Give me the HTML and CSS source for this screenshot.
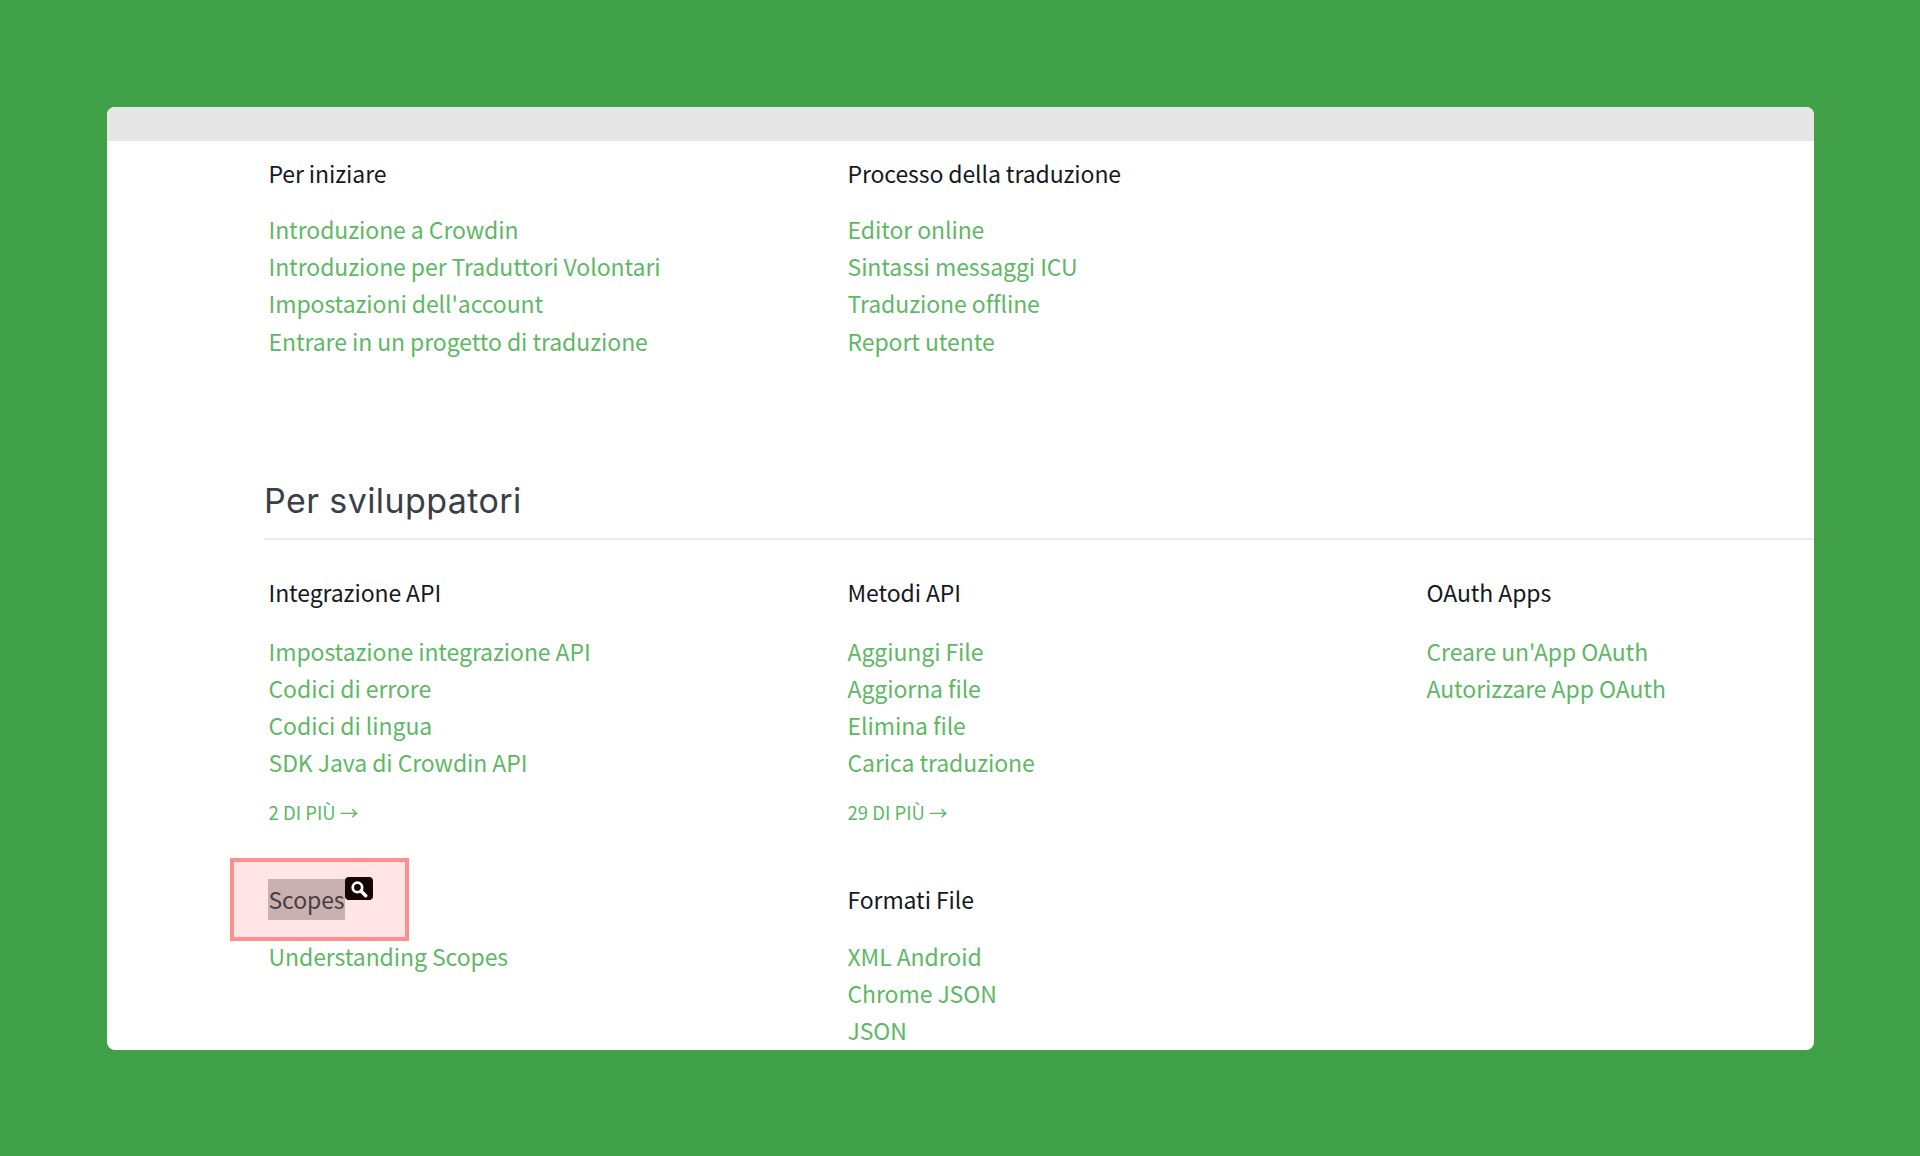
FILE: index.html
```html
<!DOCTYPE html>
<html lang="it">
<head>
    <meta charset="UTF-8">
    <title>Per sviluppatori</title>
    <link rel="stylesheet" href="styles.css">
</head>
<body>
    <div class="window">
        <div class="window-bar"></div>
        <div class="content">
            <div class="grid first-grid">
                <div class="group">
                    <h3>Per iniziare</h3>
                    <a href="#">Introduzione a Crowdin</a>
                    <a href="#">Introduzione per Traduttori Volontari</a>
                    <a href="#">Impostazioni dell'account</a>
                    <a href="#">Entrare in un progetto di traduzione</a>
                </div>
                <div class="group">
                    <h3>Processo della traduzione</h3>
                    <a href="#">Editor online</a>
                    <a href="#">Sintassi messaggi ICU</a>
                    <a href="#">Traduzione offline</a>
                    <a href="#">Report utente</a>
                </div>
            </div>

            <h2 class="section-title">Per sviluppatori</h2>

            <div class="grid dev-grid">
                <div class="group">
                    <h3>Integrazione API</h3>
                    <a href="#">Impostazione integrazione API</a>
                    <a href="#">Codici di errore</a>
                    <a href="#">Codici di lingua</a>
                    <a href="#">SDK Java di Crowdin API</a>
                    <a class="more" href="#">2 DI PIÙ →</a>
                </div>
                <div class="group">
                    <h3>Metodi API</h3>
                    <a href="#">Aggiungi File</a>
                    <a href="#">Aggiorna file</a>
                    <a href="#">Elimina file</a>
                    <a href="#">Carica traduzione</a>
                    <a class="more" href="#">29 DI PIÙ →</a>
                </div>
                <div class="group">
                    <h3>OAuth Apps</h3>
                    <a href="#">Creare un'App OAuth</a>
                    <a href="#">Autorizzare App OAuth</a>
                </div>
                <div class="group">
                    <h3><span class="match">Scopes</span></h3>
                    <div class="highlight-box"></div>
                    <span class="search-badge">
                        <svg width="18" height="18" viewBox="0 0 16 16"><circle cx="6.6" cy="6.6" r="4.2" fill="none" stroke="#fff" stroke-width="2.4"/><path d="M9.8 9.8l4.2 4.2" stroke="#fff" stroke-width="3" stroke-linecap="round"/></svg>
                    </span>
                    <a href="#">Understanding Scopes</a>
                </div>
                <div class="group">
                    <h3>Formati File</h3>
                    <a href="#">XML Android</a>
                    <a href="#">Chrome JSON</a>
                    <a href="#">JSON</a>
                </div>
            </div>
        </div>
    </div>
</body>
</html>
```

FILE: styles.css
```css
body {
    margin: 0;
    height: 1156px;
    padding: 107px 106px 0 107px;
    box-sizing: border-box;
    overflow: hidden;
    background-color: #41a149;
    font-family: "Noto Sans CJK SC", "Noto Sans", sans-serif;
}

.window {
    height: 943px;
    background-color: white;
    border-radius: 8px;
    overflow: hidden;
}

.window-bar {
    height: 34px;
    background-color: #e6e6e6;
}

.content {
    padding-left: 158px;
}

.grid {
    display: grid;
    grid-template-columns: repeat(3, 579px);
    padding-left: 3.5px;
}

.first-grid {
    height: 320px;
    padding-top: 14px;
}

.group {
    position: relative;
    display: flex;
    flex-direction: column;
    align-items: flex-start;
    height: 307px;
}

.group h3 {
    margin: 0 0 19px;
    font-size: 23px;
    line-height: 37px;
    font-weight: 400;
    letter-spacing: -0.1px;
    color: #15191f;
}

.dev-grid .group h3 {
    margin-bottom: 20px;
}

.dev-grid .group:nth-child(-n+3) h3 {
    margin-bottom: 21.5px;
}

.group a {
    font-size: 23px;
    line-height: 37.2px;
    letter-spacing: -0.08px;
    color: #5eb866;
    text-decoration: none;
}

.group a.more {
    margin-top: 16.5px;
    font-size: 18.5px;
    line-height: 28px;
    letter-spacing: 0;
}

.section-title {
    margin: 0 0 34px -1px;
    padding-top: 1px;
    padding-bottom: 12px;
    border-bottom: 2px solid #e9eaec;
    font-family: Inter, sans-serif;
    font-size: 34px;
    line-height: 50px;
    font-weight: 400;
    letter-spacing: 0.4px;
    color: #3a3f47;
}

.match {
    position: relative;
    z-index: 1;
    display: inline-block;
    margin: -2px 0 -2px -1px;
    padding: 2px 0 2px 1px;
    background-color: #c9b1b2;
    color: #4b3b3d;
}

/* overlays for the search hit */
.highlight-box {
    position: absolute;
    left: -38.5px;
    top: -23px;
    width: 171px;
    height: 75px;
    border: 4px solid #ff8f8f;
    background: rgba(255, 0, 0, 0.1);
}

.search-badge {
    position: absolute;
    z-index: 1;
    left: 76px;
    top: -4px;
    width: 28px;
    height: 23px;
    display: flex;
    align-items: center;
    justify-content: center;
    background-color: #170505;
    border-radius: 4px;
}
```
